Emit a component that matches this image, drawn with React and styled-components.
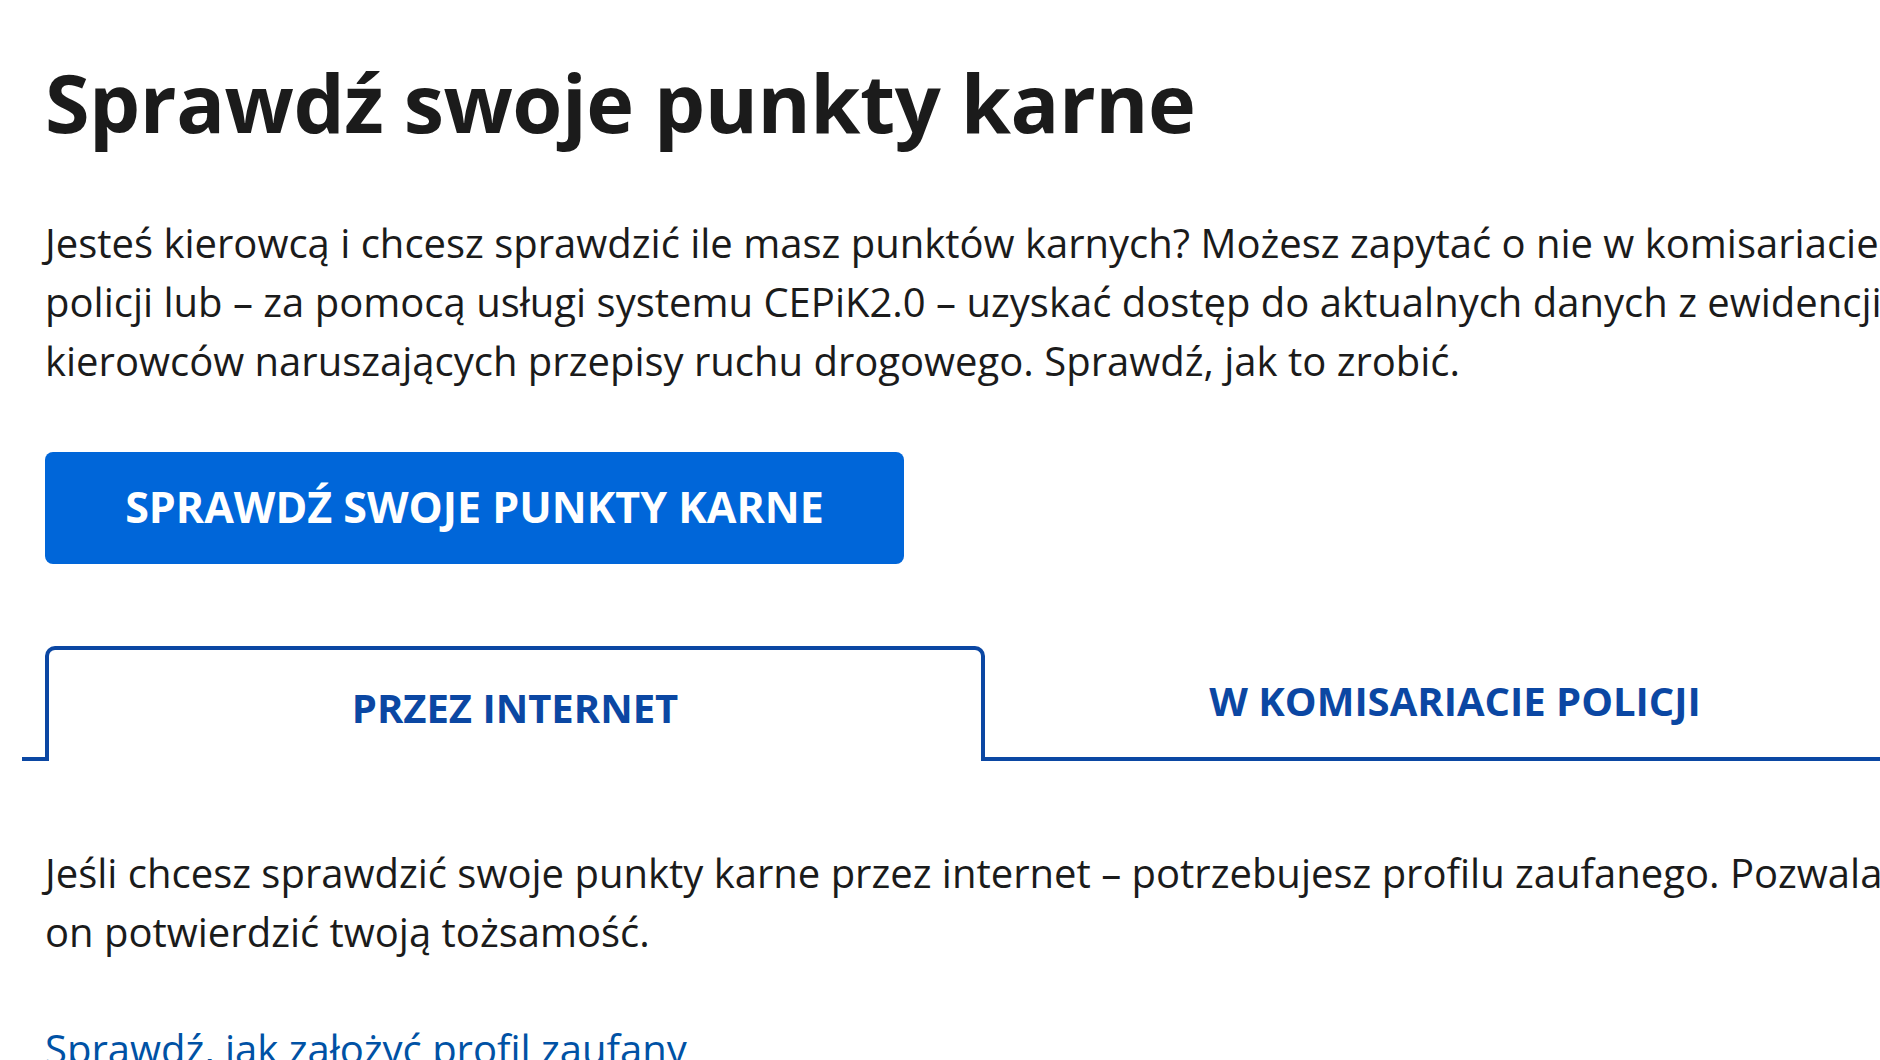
import React from "react";
import styled, { createGlobalStyle } from "styled-components";

const Global = createGlobalStyle`
  html, body { margin: 0; padding: 0; background: #fff; overflow: hidden; }
  body { font-family: "Open Sans", "Noto Sans", sans-serif; color: #1b1b1b; }
`;

const Page = styled.main`
  width: 2000px;
  padding: 0 0 0 45px;
  box-sizing: border-box;
`;

const Title = styled.h1`
  margin: 0;
  padding-top: 47px;
  font-size: 81px;
  line-height: 110px;
  font-weight: 700;
  letter-spacing: -0.5px;
`;

const Lead = styled.p`
  margin: 56px 0 0;
  font-size: 40px;
  line-height: 59px;
  font-weight: 400;
  width: 1870px;
`;

const PrimaryButton = styled.button`
  margin-top: 62px;
  width: 859px;
  height: 112px;
  border: 0;
  border-radius: 8px;
  background: #0066d9;
  color: #fff;
  font-family: inherit;
  font-weight: 700;
  font-size: 43px;
  text-transform: uppercase;
  padding: 0 0 4px;
  cursor: pointer;
`;

const TabList = styled.div`
  display: flex;
  margin: 82px 0 0 -23px;
`;

const Spacer = styled.div`
  width: 23px;
  border-bottom: 4px solid #0b47a3;
`;

const Tab = styled.button`
  width: 940px;
  height: 115px;
  box-sizing: border-box;
  background: #fff;
  font-family: inherit;
  font-weight: 700;
  font-size: 40px;
  color: #0b47a3;
  text-transform: uppercase;
  cursor: pointer;
  border: 0;
  border-bottom: 4px solid #0b47a3;
  border-radius: 0;
  padding: 0 0 2px;
  ${(p) =>
    p.$active &&
    `
    border: 4px solid #0b47a3;
    border-bottom: 0;
    border-radius: 10px 10px 0 0;
    padding: 3px 0 0;
  `}
`;

const Body = styled.p`
  margin: 82px 0 0;
  font-size: 40px;
  line-height: 59px;
  width: 1870px;
`;

const Link = styled.a`
  display: inline-block;
  margin-top: 58px;
  font-size: 40px;
  line-height: 59px;
  color: #0052a5;
  text-decoration: underline;
`;

export default function App() {
  return (
    <>
      <Global />
      <Page>
        <Title>Sprawdź swoje punkty karne</Title>
        <Lead>
          Jesteś kierowcą i chcesz sprawdzić ile masz punktów karnych? Możesz zapytać o nie w komisariacie
          policji lub – za pomocą usługi systemu CEPiK2.0 – uzyskać dostęp do aktualnych danych z ewidencji
          kierowców naruszających przepisy ruchu drogowego. Sprawdź, jak to zrobić.
        </Lead>
        <PrimaryButton>Sprawdź swoje punkty karne</PrimaryButton>
        <TabList>
          <Spacer />
          <Tab $active>Przez internet</Tab>
          <Tab>W komisariacie policji</Tab>
        </TabList>
        <Body>
          Jeśli chcesz sprawdzić swoje punkty karne przez internet – potrzebujesz profilu zaufanego. Pozwala
          on potwierdzić twoją tożsamość.
        </Body>
        <Link href="#">Sprawdź, jak założyć profil zaufany</Link>
      </Page>
    </>
  );
}
